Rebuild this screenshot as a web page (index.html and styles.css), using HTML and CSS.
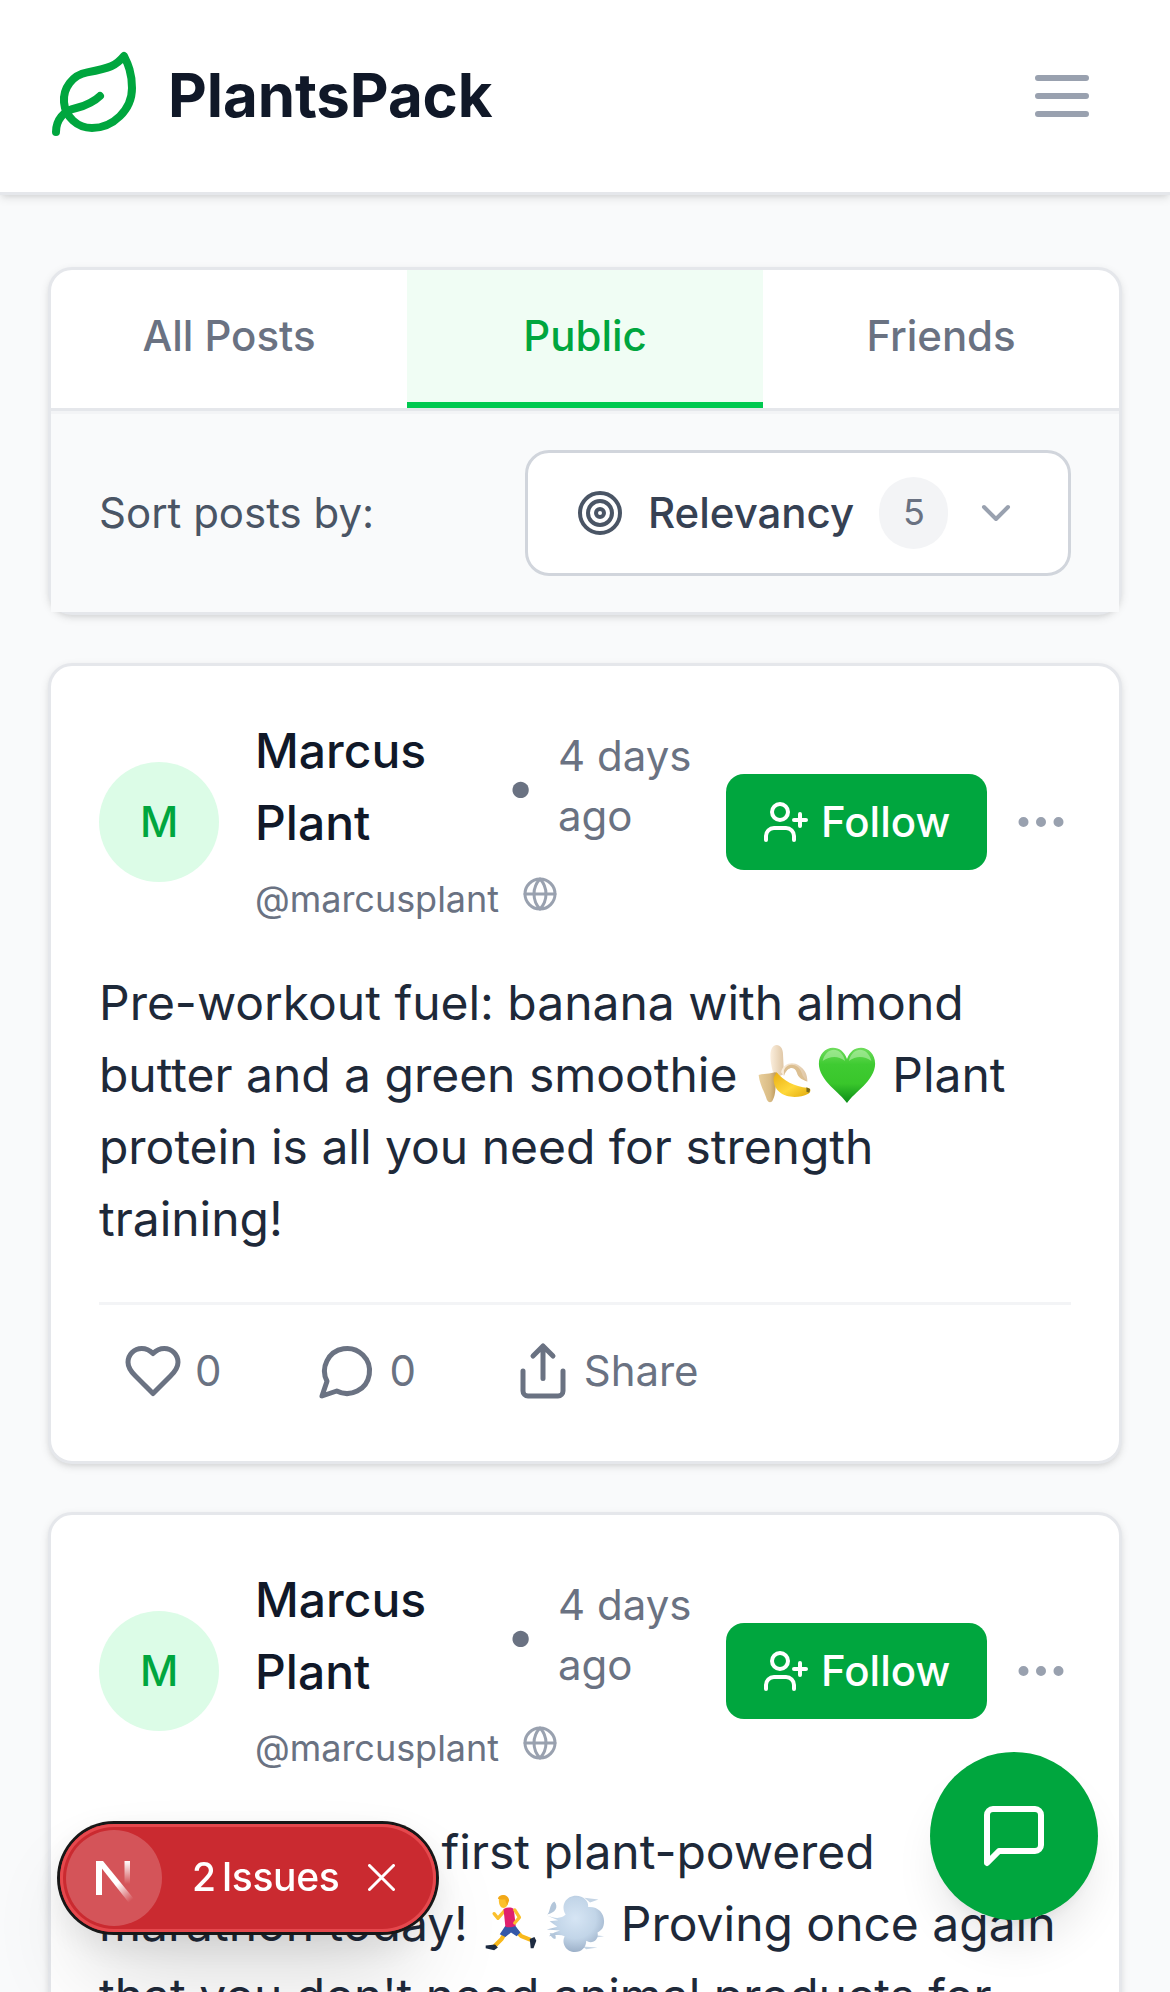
FILE: index.html
```html
<!DOCTYPE html>
<html lang="en">
<head>
<meta charset="utf-8">
<title>PlantsPack</title>
<link rel="stylesheet" href="styles.css">
</head>
<body>
<svg width="0" height="0" class="defs" aria-hidden="true">
  <defs>
    <linearGradient id="heart-fill" x1="0" y1="0" x2="0" y2="1"><stop offset="0" stop-color="#6fdc5c"/><stop offset=".3" stop-color="#3fcb32"/><stop offset=".65" stop-color="#39c62b"/><stop offset="1" stop-color="#0b8d18"/></linearGradient>
    <linearGradient id="banana-fill" x1="0" y1="0" x2="1" y2="1"><stop offset="0" stop-color="#e9ae14"/><stop offset=".55" stop-color="#ffd83a"/><stop offset="1" stop-color="#e0a90c"/></linearGradient>
    <linearGradient id="peel-fill" x1="0" y1="0" x2="1" y2="0"><stop offset="0" stop-color="#e9cf9c"/><stop offset=".6" stop-color="#d9bb84"/><stop offset="1" stop-color="#b58f50"/></linearGradient>
    <linearGradient id="flesh-fill" x1="0" y1="0" x2="1" y2="0"><stop offset="0" stop-color="#fbeedd"/><stop offset="1" stop-color="#dfc6a4"/></linearGradient>
    <radialGradient id="puff-fill" cx=".5" cy=".4" r=".6"><stop offset="0" stop-color="#d6e5f4"/><stop offset=".6" stop-color="#c2d5e8"/><stop offset="1" stop-color="#9db1c9"/></radialGradient>
    <linearGradient id="n-slash" gradientUnits="userSpaceOnUse" x1="31" y1="32" x2="45" y2="49"><stop offset="0" stop-color="#fff"/><stop offset="1" stop-color="#fff" stop-opacity="0"/></linearGradient>
    <linearGradient id="n-bar" x1="0" y1="0" x2="0" y2="1"><stop offset="0" stop-color="#fff"/><stop offset="1" stop-color="#fff" stop-opacity="0"/></linearGradient>
    <symbol id="user-plus" viewBox="0 0 24 24"><path d="M16 21v-2a4 4 0 0 0-4-4H6a4 4 0 0 0-4 4v2"/><circle cx="9" cy="7" r="4"/><path d="M19 8v6M22 11h-6"/></symbol>
    <symbol id="more" viewBox="0 0 24 24"><circle cx="5" cy="12" r="1"/><circle cx="12" cy="12" r="1"/><circle cx="19" cy="12" r="1"/></symbol>
    <symbol id="globe" viewBox="0 0 24 24"><circle cx="12" cy="12" r="10"/><path d="M12 2a14.5 14.5 0 0 0 0 20 14.5 14.5 0 0 0 0-20M2 12h20"/></symbol>
  </defs>
</svg>

<header class="topbar">
  <div class="brand">
    <svg class="icon icon-96" viewBox="0 0 24 24"><path d="M11 20A7 7 0 0 1 9.8 6.1C15.5 5 17 4.48 19 2c1 2 2 4.18 2 8 0 5.5-4.78 10-10 10Z"/><path d="M2 21c0-3 1.85-5.36 5.08-6C9.5 14.52 12 13 13 12"/></svg>
    <span class="brand-name">PlantsPack</span>
  </div>
  <button class="menu-button" aria-label="Menu"><svg class="icon icon-72" viewBox="0 0 24 24"><path d="M4 6h16M4 12h16M4 18h16"/></svg></button>
</header>

<main class="feed">
  <section class="filters">
    <nav class="tabs">
      <button class="tab">All Posts</button>
      <button class="tab tab-active">Public</button>
      <button class="tab">Friends</button>
    </nav>
    <div class="sort">
      <span class="sort-label">Sort posts by:</span>
      <button class="sort-button">
        <svg class="icon icon-48" viewBox="0 0 24 24"><circle cx="12" cy="12" r="10"/><circle cx="12" cy="12" r="6"/><circle cx="12" cy="12" r="2"/></svg>
        <span class="sort-value">Relevancy</span>
        <span class="sort-count">5</span>
        <svg class="icon icon-48 chevron" viewBox="0 0 24 24"><path d="m6 9 6 6 6-6"/></svg>
      </button>
    </div>
  </section>

  <article class="post">
    <div class="post-head">
      <div class="avatar">M</div>
      <div class="author">
        <div class="author-top">
          <h3 class="author-name">Marcus Plant</h3>
          <span class="meta bullet">•</span>
          <span class="meta">4 days ago</span>
        </div>
        <div class="handle-row"><span class="handle">@marcusplant</span><svg class="icon globe"><use href="#globe"/></svg></div>
      </div>
      <button class="follow"><svg class="icon icon-48"><use href="#user-plus"/></svg><span>Follow</span></button>
      <button class="more" aria-label="More"><svg class="icon icon-60"><use href="#more"/></svg></button>
    </div>
    <p class="post-text">Pre-workout fuel: banana with almond butter and a green smoothie <svg class="emoji" viewBox="0 0 64 64" role="img" aria-label="banana">
        <path d="M21 29C18 17 17 6 22 2c5-3 10 1 10 9l1 21-6 3z" fill="url(#flesh-fill)"/>
        <path d="M20 31c5-2 8 0 6 6-3 8-1 16-5 23-2 4-6 2-7-3-3-8-7-15-8-24 4-1 8-1 14-2z" fill="url(#peel-fill)"/>
        <path d="M25 30c8 9 18 15 34 17 3 1 3 4 0 6-16 8-38 2-37-17z" fill="url(#banana-fill)"/>
        <path d="M30 30c2-9 12-12 19-7 6 4 9 9 9 17-6-3-10-5-11-9-2-7-10-8-14 3z" fill="url(#flesh-fill)"/>
        <path d="M33 28c4-9 16-7 19 3 1 4 4 7 6 9-7-2-10-5-11-9-2-7-10-8-14 3z" fill="#dcbf91"/>
        <path d="m57 46 4 2-1 4-3-1z" fill="#7a6a1d"/>
      </svg><svg class="emoji" viewBox="0 0 64 64" role="img" aria-label="green heart">
        <path d="M32 63C25 52 2 39 2 21 2 11 9 4 17 4c7 0 12 4 15 12C35 8 40 4 47 4c8 0 15 7 15 17 0 18-23 31-30 42z" fill="url(#heart-fill)"/>
        <path d="M6 18C8 10 13 6 18 6c5 0 10 4 12 12C22 12 14 13 6 18zM34 18C36 10 41 6 46 6c5 0 10 4 12 12-7-5-16-6-24 0z" fill="#c9f5bf" opacity=".5"/>
      </svg> Plant protein is all you need for strength<br>training!</p>
    <div class="actions">
      <button class="action"><svg class="icon icon-60" viewBox="0 0 24 24"><path d="M19 14c1.49-1.46 3-3.21 3-5.5A5.5 5.5 0 0 0 16.5 3c-1.76 0-3 .5-4.5 2-1.5-1.5-2.74-2-4.5-2A5.5 5.5 0 0 0 2 8.5c0 2.3 1.5 4.05 3 5.5l7 7Z"/></svg><span>0</span></button>
      <button class="action"><svg class="icon icon-60" viewBox="0 0 24 24"><path d="M7.9 20A9 9 0 1 0 4 16.1L2 22Z"/></svg><span>0</span></button>
      <button class="action share"><svg class="icon icon-60" viewBox="0 0 24 24"><path d="M4 12v8a2 2 0 0 0 2 2h12a2 2 0 0 0 2-2v-8M16 6l-4-4-4 4M12 2v13"/></svg><span>Share</span></button>
    </div>
  </article>

  <article class="post">
    <div class="post-head">
      <div class="avatar">M</div>
      <div class="author">
        <div class="author-top">
          <h3 class="author-name">Marcus Plant</h3>
          <span class="meta bullet">•</span>
          <span class="meta">4 days ago</span>
        </div>
        <div class="handle-row"><span class="handle">@marcusplant</span><svg class="icon globe"><use href="#globe"/></svg></div>
      </div>
      <button class="follow"><svg class="icon icon-48"><use href="#user-plus"/></svg><span>Follow</span></button>
      <button class="more" aria-label="More"><svg class="icon icon-60"><use href="#more"/></svg></button>
    </div>
    <p class="post-text">Completed my first plant-powered<br>marathon today! <svg class="emoji emoji-runner" viewBox="0 0 64 64" role="img" aria-label="runner">
        <path d="M37 40 43 46 53 50" fill="none" stroke="#f9b91b" stroke-width="4.500" stroke-linejoin="round"/>
        <path d="M27 41 22 49 14 57" fill="none" stroke="#f9b91b" stroke-width="4.500" stroke-linejoin="round"/>
        <path d="M26 35 36 34 42 42 38 46 32 42 26 47 20 44z" fill="#3558a8"/>
        <path d="m52 49 5-2 2 4-3 8h-3zM5 56l10-1 3 3-4 3-9-2z" fill="#1d2b41"/>
        <path d="m25 19-7 8-4-5" fill="none" stroke="#fbc02d" stroke-width="3.500" stroke-linecap="round" stroke-linejoin="round"/>
        <path d="M24 17c4-2 8-2 11 0l1 9 1 9c-4 2-8 2-11 1z" fill="#e0206e"/>
        <path d="m36 18 5 8-5 6" fill="none" stroke="#fbc02d" stroke-width="3.500" stroke-linecap="round" stroke-linejoin="round"/>
        <path d="M19 7c0-5 10-5 10 1 0 5-2 8-5 8s-5-3-5-9z" fill="#fbc02d"/>
        <path d="M18 6c1-6 12-5 12 2l-2 5c-1-2-2-4-2-6-3 0-6 0-8-1z" fill="#f2a817"/>
      </svg><svg class="emoji" viewBox="0 0 64 64" role="img" aria-label="dash">
        <path d="m42 5 15 2-9 3M46 44l17 2-12 2M40 57l16 1-12 2" fill="#c5d5e5"/>
        <path d="M2 24c10 4 16 3 20-1-6-10 1-20 11-20 8 0 14 6 13 12 10-1 17 6 17 15 0 7-3 10-7 12 2 8-6 13-12 9 0 7-5 12-12 12-9 0-15-9-11-17-5-2-10-1-17 0 4-3 8-5 12-6L2 39l11-3-8-6 9-1z" fill="url(#puff-fill)"/>
        <path d="M2 23c4-2 2-11 8-14 5 6 1 12-8 14zM5 43c4-1 8 2 6 6-3 0-5-3-6-6z" fill="#b3c6da"/>
      </svg> Proving once again<br>that you don't need animal products for</p>
  </article>
</main>

<div class="issues">
  <span class="issues-logo"><svg viewBox="0 0 54 54" width="54" height="54"><path d="M9 10h6v34H9z" fill="#fff"/><path d="M9 10h7l31 38-5 4z" fill="url(#n-slash)"/><path d="M37.500 10h5.500v23h-5.500z" fill="url(#n-bar)"/></svg></span>
  <span class="issues-text"><span>2</span><span>Issues</span></span>
  <svg class="issues-close" viewBox="0 0 27 27"><path d="m1.500 1.500 24 24m0-24-24 24"/></svg>
</div>

<button class="chat" aria-label="Messages"><svg class="icon icon-72" viewBox="0 0 24 24"><path d="M21 15a2 2 0 0 1-2 2H7l-4 4V5a2 2 0 0 1 2-2h14a2 2 0 0 1 2 2z"/></svg></button>
</body>
</html>
```
FILE: styles.css
```css
* { box-sizing: border-box; margin: 0; padding: 0; }
html { height: 1992px; overflow: hidden; }
body { height: 1992px; overflow: hidden; background: #f9fafb; color: #101828; font-family: Inter, "Liberation Sans", sans-serif; font-size: 48px; line-height: 72px; }
button { border: 0; background: none; font: inherit; color: inherit; }
.defs { position: absolute; }

.icon { display: block; flex: none; fill: none; stroke: currentColor; stroke-width: 2; stroke-linecap: round; stroke-linejoin: round; }
.icon-48 { width: 48px; height: 48px; }
.icon-60 { width: 60px; height: 60px; }
.icon-72 { width: 72px; height: 72px; }
.icon-96 { width: 96px; height: 96px; }

.topbar { display: flex; align-items: center; justify-content: space-between; height: 195px; padding: 0 48px; background: #fff; border-bottom: 3px solid #e5e7eb; box-shadow: 0 3px 9px rgba(0,0,0,.1), 0 3px 6px -3px rgba(0,0,0,.1); }
.brand { display: flex; align-items: center; gap: 24px; color: #00a63e; }
.brand-name { padding-bottom: 2px; font-size: 60px; font-weight: 700; line-height: 84px; letter-spacing: -.1px; color: #101828; }
.menu-button { padding: 24px; color: #99a1af; }

.feed { display: flex; flex-direction: column; gap: 48px; padding: 72px 48px 0; }
.filters, .post { background: #fff; border: 3px solid #e5e7eb; border-radius: 24px; box-shadow: 0 3px 9px rgba(0,0,0,.1), 0 3px 6px -3px rgba(0,0,0,.1); }
.tabs { display: grid; grid-template-columns: repeat(3, 1fr); border-bottom: 3px solid #e5e7eb; }
.tab { padding: 36px 0; border-bottom: 6px solid transparent; font-size: 42px; font-weight: 500; line-height: 60px; letter-spacing: -.05px; color: #6a7282; }
.tab-active { background: #f0fdf4; border-color: #00c950; color: #00a63e; }
.sort { display: flex; align-items: center; justify-content: space-between; padding: 36px 48px; border-top: 3px solid #f3f4f6; background: #f9fafb; }
.sort-label { font-size: 42px; line-height: 60px; color: #4a5565; }
.sort-button { display: flex; align-items: center; gap: 24px; width: 546px; height: 126px; padding: 0 48px; border: 3px solid #d1d5dc; border-radius: 24px; background: #fff; font-size: 42px; font-weight: 500; line-height: 60px; color: #364153; }
.sort-value { width: 207px; text-align: left; letter-spacing: -.03px; }
.sort-button .icon { color: #4a5565; }
.sort-button .chevron { color: #99a1af; }
.sort-count { width: 69px; padding: 11px 0 13px; border-radius: 36px; background: #f3f4f6; font-size: 36px; font-weight: 400; line-height: 48px; letter-spacing: -.7px; text-align: center; color: #6a7282; }

.post { padding: 48px; }
.post-head { display: flex; align-items: center; margin-bottom: 36px; }
.avatar { display: grid; place-items: center; flex: none; width: 120px; height: 120px; margin-right: 36px; border-radius: 50%; background: #dcfce7; font-size: 42px; font-weight: 500; letter-spacing: -.5px; color: #00a63e; }
.author { flex: 1; min-width: 0; margin-right: 24px; }
.author-top { display: flex; align-items: center; gap: 24px; }
.author-name { flex: none; width: 230px; padding-top: 1px; margin-bottom: -1px; font-size: 48px; font-weight: 500; }
.meta { font-size: 42px; line-height: 60px; color: #6a7282; }
.bullet { display: flex; flex: none; justify-content: center; width: 25px; padding: 2px 2px 0 0; font-size: 52px; }
.handle-row { height: 72px; padding-top: 1px; white-space: nowrap; }
.handle { font-size: 36px; color: #6a7282; letter-spacing: -.03px; }
.globe { display: inline-block; width: 36px; height: 36px; margin-left: 23px; vertical-align: baseline; color: #99a1af; }
.follow { display: flex; align-items: center; gap: 11px; width: 261px; height: 96px; padding: 0 36px; margin-right: 24px; border-radius: 18px; background: #00a63e; font-size: 42px; font-weight: 500; line-height: 60px; color: #fff; }
.more { color: #99a1af; }
.post-text { padding-top: 1px; letter-spacing: -.02px; color: #1e2939; }
.emoji { display: inline-block; width: 60px; height: 60px; margin: 0 2px; vertical-align: -12px; }
.emoji-runner { margin-left: 0; }
.actions { display: flex; gap: 48px; margin-top: 47px; padding-top: 24px; border-top: 3px solid #f3f4f6; }
.action { display: flex; align-items: center; gap: 12px; padding: 12px 24px; font-size: 42px; line-height: 60px; letter-spacing: -.1px; color: #6a7282; }
.share { padding-left: 25px; gap: 11px; }

.issues { position: fixed; left: 60px; top: 1824px; display: flex; align-items: center; width: 376px; height: 108px; padding-left: 6px; border-radius: 54px; background: #ca2a30; color: #fff; box-shadow: 0 0 0 3px #171717, inset 0 0 0 3px #e5484d, 0 48px 96px -24px rgba(0,0,0,.24), 0 12px 36px rgba(0,0,0,.1); }
.issues-logo { display: grid; place-items: center; width: 96px; height: 96px; border-radius: 50%; background: rgba(255,255,255,.2); }
.issues-text { display: flex; gap: 6px; padding-bottom: 2px; margin-left: 30px; font-size: 39px; font-weight: 500; line-height: 48px; letter-spacing: -.4px; }
.issues-close { width: 27px; height: 27px; margin: 0 0 2px 29px; fill: none; stroke: #fff; stroke-width: 3; stroke-linecap: round; }
.chat { position: fixed; left: 930px; top: 1752px; display: grid; place-items: center; width: 168px; height: 168px; border-radius: 50%; background: #00a63e; color: #fff; box-shadow: 0 30px 45px -9px rgba(0,0,0,.1), 0 12px 18px -12px rgba(0,0,0,.1); }
```
